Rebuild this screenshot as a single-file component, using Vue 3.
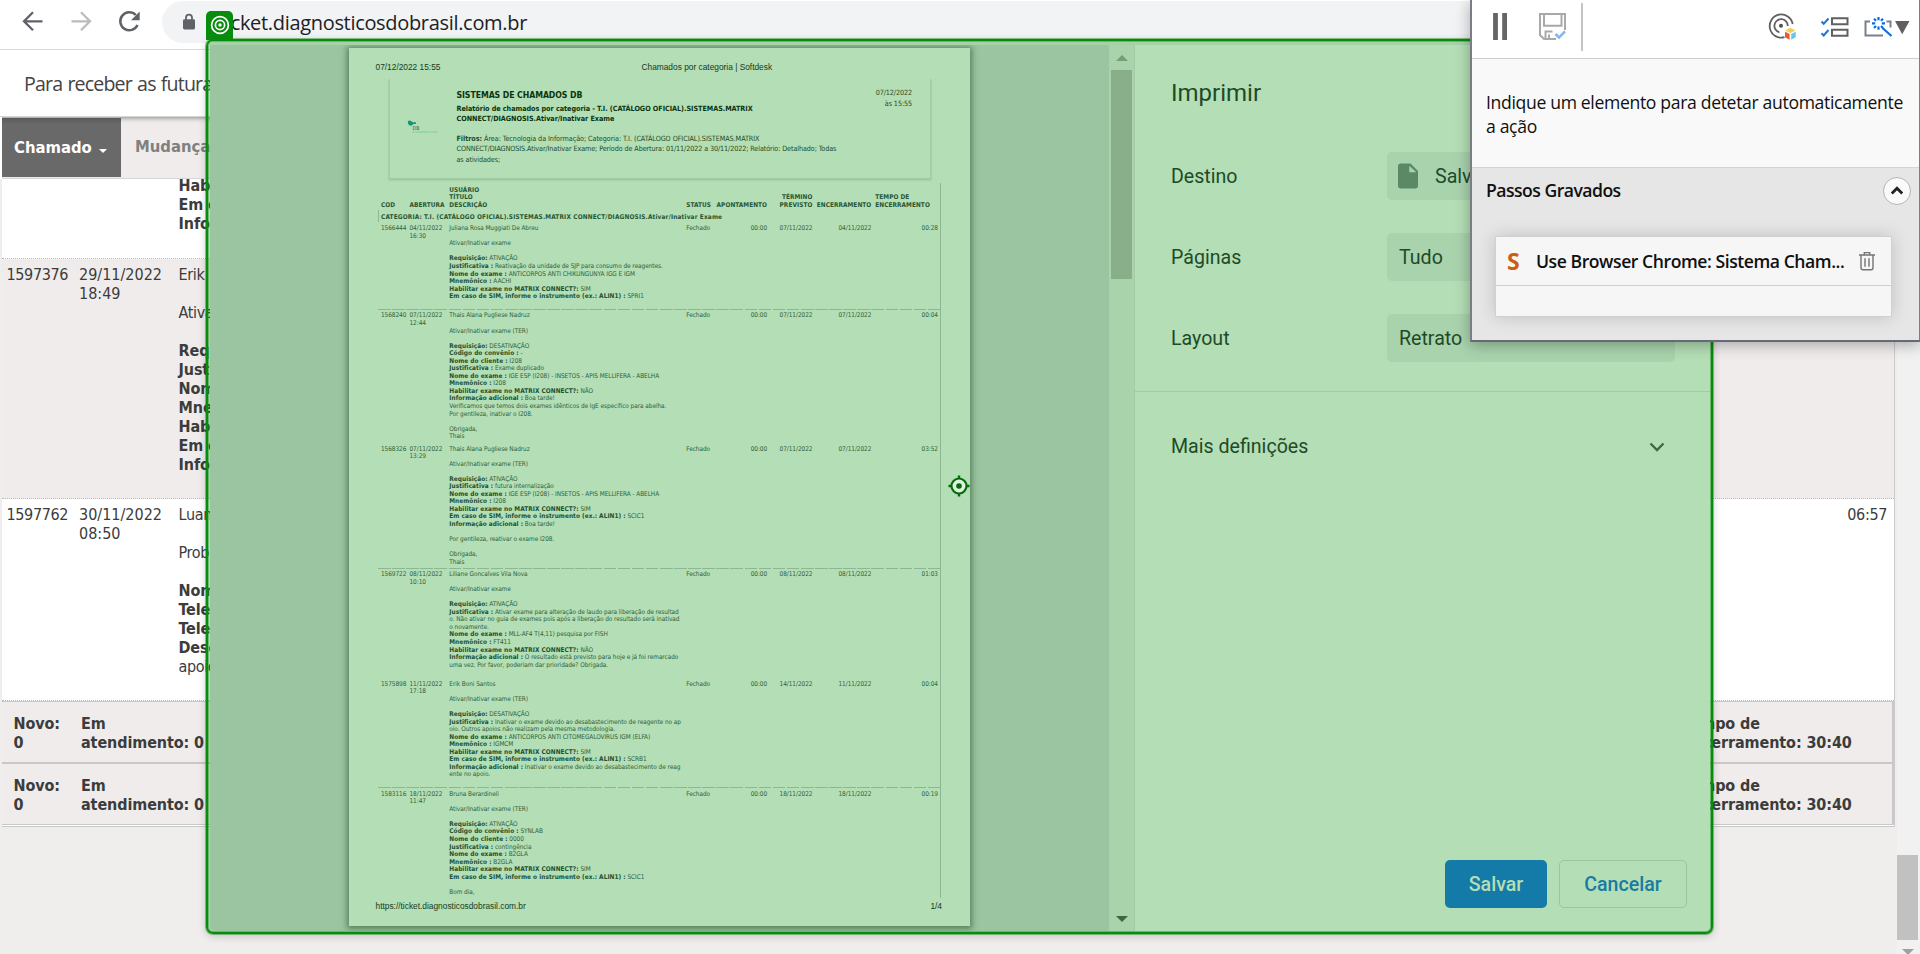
<script setup>
const tickets = [
  {
    id: '1566444', date: '04/11/2022', time: '16:30', user: 'Juliana Rosa Muggiati De Abreu', title: 'Ativar/Inativar exame',
    due: '07/11/2022', closed: '04/11/2022', spent: '00:28', gap: true, rule: false,
    lines: [
      ['Requisição:', 'ATIVAÇÃO'],
      ['Justificativa :', 'Reativação da unidade de SJP para consumo de reagentes.'],
      ['Nome do exame :', 'ANTICORPOS ANTI CHIKUNGUNYA IGG E IGM'],
      ['Mnemônico :', 'AACHI'],
      ['Habilitar exame no MATRIX CONNECT?:', 'SIM'],
      ['Em caso de SIM, informe o instrumento (ex.: ALIN1) :', 'SPRI1'],
    ],
  },
  {
    id: '1568240', date: '07/11/2022', time: '12:44', user: 'Thais Alana Pugliese Nadruz', title: 'Ativar/Inativar exame (TER)',
    due: '07/11/2022', closed: '07/11/2022', spent: '00:04', gap: false, rule: true,
    lines: [
      ['Requisição:', 'DESATIVAÇÃO'],
      ['Código do convênio :', '-'],
      ['Nome do cliente :', 'I208'],
      ['Justificativa :', 'Exame duplicado'],
      ['Nome do exame :', 'IGE ESP (I208) - INSETOS - APIS MELLIFERA - ABELHA'],
      ['Mnemônico :', 'I208'],
      ['Habilitar exame no MATRIX CONNECT?:', 'NÃO'],
      ['Informação adicional :', 'Boa tarde!'],
      ['', 'Verificamos que temos dois exames idênticos de IgE específico para abelha.'],
      ['', 'Por gentileza, inativar o I208.'],
      ['', ''],
      ['', 'Obrigada,'],
      ['', 'Thais'],
    ],
  },
  {
    id: '1568326', date: '07/11/2022', time: '13:29', user: 'Thais Alana Pugliese Nadruz', title: 'Ativar/Inativar exame (TER)',
    due: '07/11/2022', closed: '07/11/2022', spent: '03:52', gap: false, rule: false,
    lines: [
      ['Requisição:', 'ATIVAÇÃO'],
      ['Justificativa :', 'futura internalização'],
      ['Nome do exame :', 'IGE ESP (I208) - INSETOS - APIS MELLIFERA - ABELHA'],
      ['Mnemônico :', 'I208'],
      ['Habilitar exame no MATRIX CONNECT?:', 'SIM'],
      ['Em caso de SIM, informe o instrumento (ex.: ALIN1) :', 'SCIC1'],
      ['Informação adicional :', 'Boa tarde!'],
      ['', ''],
      ['', 'Por gentileza, reativar o exame I208.'],
      ['', ''],
      ['', 'Obrigada,'],
      ['', 'Thais'],
    ],
  },
  {
    id: '1569722', date: '08/11/2022', time: '10:10', user: 'Liliane Goncalves Vila Nova', title: 'Ativar/Inativar exame',
    due: '08/11/2022', closed: '08/11/2022', spent: '01:03', gap: true, rule: true,
    lines: [
      ['Requisição:', 'ATIVAÇÃO'],
      ['Justificativa :', 'Ativar exame para alteração de laudo para liberação de resultad'],
      ['', 'o. Não ativar no guia de exames pois após a liberação do resultado será inativad'],
      ['', 'o novamente.'],
      ['Nome do exame :', 'MLL-AF4 T(4,11) pesquisa por FISH'],
      ['Mnemônico :', 'FT411'],
      ['Habilitar exame no MATRIX CONNECT?:', 'NÃO'],
      ['Informação adicional :', 'O resultado está previsto para hoje e já foi remarcado'],
      ['', 'uma vez. Por favor, poderiam dar prioridade? Obrigada.'],
    ],
  },
  {
    id: '1575898', date: '11/11/2022', time: '17:18', user: 'Erik Boni Santos', title: 'Ativar/Inativar exame (TER)',
    due: '14/11/2022', closed: '11/11/2022', spent: '00:04', gap: true, rule: false,
    lines: [
      ['Requisição:', 'DESATIVAÇÃO'],
      ['Justificativa :', 'Inativar o exame devido ao desabastecimento de reagente no ap'],
      ['', 'oio. Outros apoios não realizam pela mesma metodologia.'],
      ['Nome do exame :', 'ANTICORPOS ANTI CITOMEGALOVIRUS IGM (ELFA)'],
      ['Mnemônico :', 'IGMCM'],
      ['Habilitar exame no MATRIX CONNECT?:', 'SIM'],
      ['Em caso de SIM, informe o instrumento (ex.: ALIN1) :', 'SCRB1'],
      ['Informação adicional :', 'Inativar o exame devido ao desabastecimento de reag'],
      ['', 'ente no apoio.'],
    ],
  },
  {
    id: '1583116', date: '18/11/2022', time: '11:47', user: 'Bruna Berardineli', title: 'Ativar/Inativar exame (TER)',
    due: '18/11/2022', closed: '18/11/2022', spent: '00:19', gap: false, rule: true,
    lines: [
      ['Requisição:', 'ATIVAÇÃO'],
      ['Código do convênio :', 'SYNLAB'],
      ['Nome do cliente :', '0000'],
      ['Justificativa :', 'contingência'],
      ['Nome do exame :', 'B2GLA'],
      ['Mnemônico :', 'B2GLA'],
      ['Habilitar exame no MATRIX CONNECT?:', 'SIM'],
      ['Em caso de SIM, informe o instrumento (ex.: ALIN1) :', 'SCIC1'],
      ['', ''],
      ['', 'Bom dia,'],
    ],
  },
]
</script>

<template>
  <div class="screen">
    <header class="chrome">
      <svg class="nav-icons" width="162" height="49" viewBox="0 0 162 49" fill="none" stroke-width="2.3">
        <path d="M42.5 21.3H24.5M33 12.3L24 21.3L33 30.3" stroke="#5f6368" />
        <path d="M71.5 21.3H89.5M81 12.3L90 21.3L81 30.3" stroke="#babcbe" />
        <path d="M137.5 25A9 9 0 1 1 135.8 15" stroke="#5f6368" stroke-width="2.5" />
        <path d="M139.7 11.5V20.2H131Z" fill="#5f6368" />
      </svg>
      <div class="omnibox">
        <svg class="lock" width="14" height="18" viewBox="0 0 14 18">
          <rect x="1" y="6.2" width="12" height="10.3" rx="1.4" fill="#5f6368" />
          <path d="M4 7V4.6A3 3 0 0 1 10 4.6V7" fill="none" stroke="#5f6368" stroke-width="1.8" />
        </svg>
        <span class="url">ticket.diagnosticosdobrasil.com.br</span>
      </div>
    </header>

    <div class="notice"><span>Para receber as futuras</span></div>

    <nav class="menu">
      <div class="tab active">Chamado<i class="caret"></i></div>
      <div class="tab">Mudança</div>
    </nav>

    <div class="body">
      <main class="content">
        <section class="list">
          <div class="row first">
            <p></p><p></p>
            <p><b>Habilitar<br>Em caso<br>Informa</b></p>
          </div>
          <div class="row shaded">
            <p>1597376</p>
            <p class="when">29/11/2022<br>18:49</p>
            <p>Erik<br><br>Ativar<br><br><b>Requis<br>Justific<br>Nome<br>Mnem<br>Habilit<br>Em caso<br>Informa</b></p>
          </div>
          <div class="row third">
            <p>1597762</p>
            <p class="when">30/11/2022<br>08:50</p>
            <p>Luana<br><br>Probl<br><br><b>Nome<br>Telef<br>Telef<br>Descr</b><br>apoio</p>
            <p class="elapsed">06:57</p>
          </div>
          <div v-for="n in 2" :key="n" class="total">
            <b>Novo:<br>0</b>
            <b>Em<br>atendimento: 0</b>
            <b>Tempo de<br>Encerramento: 30:40</b>
          </div>
        </section>
      </main>
      <aside class="page-scroll">
        <div class="page-thumb"></div>
        <i class="page-arrow"></i>
      </aside>
    </div>

    <div class="highlight">
      <div class="dialog">
        <section class="preview">
          <article class="sheet">
            <div class="sheet-top">
              <span>07/12/2022 15:55</span>
              <span class="sheet-title">Chamados por categoria | Softdesk</span>
            </div>
            <div class="banner">
              <svg class="logo" width="34" height="16" viewBox="0 0 34 16">
                <path d="M1 1.2Q3 -.3 4.5 1.5L8 3.1L5.5 4.8Q4 6.5 2 5Q.4 3.4 1 1.2Z" fill="#15967a" />
                <circle cx="8" cy="3.1" r="0.9" fill="#15604d" />
                <text x="5.5" y="10" font-size="5.2" textLength="7" fill="#245c47">DB</text>
                <text x="5.5" y="13.3" font-size="2.6" textLength="25" fill="#4fb795">DIAGNÓSTICOS</text>
              </svg>
              <div class="banner-text">
                <h1>SISTEMAS DE CHAMADOS DB</h1>
                <h2>Relatório de chamados por categoria - T.I. (CATÁLOGO OFICIAL).SISTEMAS.MATRIX<br>CONNECT/DIAGNOSIS.Ativar/Inativar Exame</h2>
                <p><b>Filtros:</b> Área: Tecnologia da Informação; Categoria: T.I. (CATÁLOGO OFICIAL).SISTEMAS.MATRIX<br>CONNECT/DIAGNOSIS.Ativar/Inativar Exame; Período de Abertura: 01/11/2022 a 30/11/2022; Relatório: Detalhado; Todas<br>as atividades;</p>
              </div>
              <div class="stamp">07/12/2022<br>às 15:55</div>
            </div>
            <div class="report">
              <div class="cols head">
                <span>COD</span><span>ABERTURA</span><span>USUÁRIO<br>TÍTULO<br>DESCRIÇÃO</span><span>STATUS</span>
                <span class="r">APONTAMENTO</span><span class="r">TÉRMINO<br>PREVISTO</span><span class="r">ENCERRAMENTO</span><span class="tempo">TEMPO DE<br>ENCERRAMENTO</span>
              </div>
              <div class="category">CATEGORIA: T.I. (CATÁLOGO OFICIAL).SISTEMAS.MATRIX CONNECT/DIAGNOSIS.Ativar/Inativar Exame</div>
              <div v-for="t in tickets" :key="t.id" class="cols ticket" :class="{ gap: t.gap, rule: t.rule }">
                <span>{{ t.id }}</span>
                <span>{{ t.date }}<br>{{ t.time }}</span>
                <div class="desc">
                  <p>{{ t.user }}</p><p></p><p>{{ t.title }}</p><p></p>
                  <p v-for="(l, i) in t.lines" :key="i"><b v-if="l[0]">{{ l[0] }}</b>{{ l[0] ? ' ' : '' }}{{ l[1] }}</p>
                </div>
                <span>Fechado</span>
                <span class="r">00:00</span><span class="r">{{ t.due }}</span><span class="r">{{ t.closed }}</span><span class="r">{{ t.spent }}</span>
              </div>
            </div>
            <div class="sheet-foot"><span>https://ticket.diagnosticosdobrasil.com.br</span><span>1/4</span></div>
          </article>
          <div class="track">
            <i class="up"></i>
            <div class="thumb"></div>
            <i class="down"></i>
          </div>
        </section>

        <section class="settings">
          <h3>Imprimir</h3>
          <div class="field">
            <label>Destino</label>
            <div class="select">
              <svg class="file" width="20" height="26" viewBox="0 0 20 26">
                <path d="M3 .5H12.5L20 8V22.5Q20 25.5 17 25.5H3Q0 25.5 0 22.5V3.5Q0 .5 3 .5Z" fill="#5b8966" />
                <path d="M11.3 2.8V9.2H18.2Z" fill="#a9d3ad" />
              </svg>
              <span>Salvar</span>
            </div>
          </div>
          <div class="field"><label>Páginas</label><div class="select"><span>Tudo</span></div></div>
          <div class="field"><label>Layout</label><div class="select"><span>Retrato</span></div></div>
          <div class="more">
            <span>Mais definições</span>
            <svg width="16" height="10" viewBox="0 0 16 10"><path d="M1.5 1.5L8 8L14.5 1.5" fill="none" stroke="#3c6945" stroke-width="2.3" /></svg>
          </div>
          <div class="actions">
            <button class="save">Salvar</button>
            <button class="cancel">Cancelar</button>
          </div>
        </section>
      </div>
    </div>

    <div class="badge">
      <svg width="20" height="20" viewBox="0 0 20 20" fill="none" stroke="#fff" stroke-width="1.7">
        <circle cx="10" cy="10" r="8.4" /><circle cx="10" cy="10" r="4.6" /><circle cx="10" cy="10" r="1.7" fill="#fff" stroke="none" />
      </svg>
    </div>

    <svg class="crosshair" width="22" height="22" viewBox="0 0 22 22">
      <path d="M11 .5V21.5M.5 11H21.5" stroke="#056b09" stroke-width="2.4" />
      <circle cx="11" cy="11" r="7.5" fill="#def0df" stroke="#056b09" stroke-width="2.1" />
      <circle cx="11" cy="11" r="2.8" fill="#056b09" />
    </svg>

    <section class="recorder">
      <div class="toolbar">
        <svg width="446" height="58" viewBox="0 0 446 58" fill="none">
          <path d="M23.5 13V40M32.6 13V40" stroke="#656565" stroke-width="4.8" />
          <g stroke="#a9a9a9" stroke-width="2">
            <path d="M84 39H72L68 35V14H93V30M72 14V25.7H89.5V14" />
            <path d="M73.5 39V31.4H80.5M77 34.5V39" />
          </g>
          <path d="M83.5 34L87 37.5L93 31.3" stroke="#84b4f2" stroke-width="2.5" />
          <path d="M110 3V51" stroke="#c4c4c4" stroke-width="2" />
          <g stroke="#606060" stroke-width="1.8">
            <path d="M312.5 37.2A11.6 11.6 0 1 1 320.7 24" />
            <path d="M307.5 32.4A6.7 6.7 0 1 1 315.8 26" />
          </g>
          <circle cx="309" cy="25.7" r="2" fill="#505050" />
          <path d="M313.2 30.4L318.4 27.8L323.5 30.4L318.4 33Z" fill="#f3cf57" />
          <path d="M313 31.8L317.6 34V39.8L313 37.2Z" fill="#f0562b" />
          <path d="M323.7 31.8L319.2 34V39.8L323.7 37.2Z" fill="#63c6f2" />
          <path d="M349.5 21.5L351.7 23.8L356.5 18.5M349.5 33.2L351.7 35.5L356.5 30" stroke="#1976dc" stroke-width="2" />
          <path d="M360 18.2H375.5V24.2H360ZM360 29.7H375.5V35.7H360Z" stroke="#606060" stroke-width="2" />
          <path d="M398 21.5H393.5V35.5H411M414.5 21.5H418.5V27.5" stroke="#76828b" stroke-width="2" />
          <path d="M410.5 28L419.5 36" stroke="#0d6ce0" stroke-width="2.2" />
          <path d="M406.5 17V20.2M406.5 26.5V29.8M400 23.4H403.2M409.8 23.4H413M402 18.8L404 20.8M409 26L411 28M411 18.8L409 20.8M402 28L404 26" stroke="#0d6ce0" stroke-width="2.2" />
          <path d="M423 21H437.5L430.2 34.3Z" fill="#5f5f5f" />
        </svg>
      </div>
      <div class="hint">Indique um elemento para detetar automaticamente<br>a ação</div>
      <div class="steps">
        <div class="steps-head">
          <span>Passos Gravados</span>
          <div class="collapse">
            <svg width="14" height="9" viewBox="0 0 14 9"><path d="M1.8 7.5L7 2.3L12.2 7.5" fill="none" stroke="#222" stroke-width="2.8" /></svg>
          </div>
        </div>
        <div class="card">
          <div class="step">
            <b class="s-logo">S</b>
            <span>Use Browser Chrome: Sistema Cham...</span>
            <svg width="18" height="20" viewBox="0 0 18 20" fill="none" stroke="#747474" stroke-width="1.4">
              <path d="M1 4H17M6.3 4V1.6H11.7V4M3 4V16.7Q3 18.7 5 18.7H13Q15 18.7 15 16.7V4M7 7.2V15.7M11 7.2V15.7" />
            </svg>
          </div>
          <div class="empty"></div>
        </div>
      </div>
    </section>
  </div>
</template>

<style>
html, body { margin: 0; overflow: hidden; }
</style>

<style scoped>
* { box-sizing: border-box; }
p, h1, h2, h3 { margin: 0; }
.screen { position: relative; width: 1920px; height: 954px; overflow: hidden; background: #fff; display: flex; flex-direction: column; font-family: "DejaVu Sans Condensed", "DejaVu Sans", sans-serif; font-stretch: condensed; color: #3c3c3c; }

.chrome { height: 50px; flex: none; display: flex; border-bottom: 1px solid #dadada; }
.nav-icons { flex: none; }
.omnibox { flex: 1; margin-top: 1px; height: 42px; border-radius: 21px 0 0 21px; background: #f1f3f4; display: flex; align-items: center; padding-left: 20px; }
.lock { flex: none; margin-top: -1px; }
.url { width: 331px; display: flex; justify-content: flex-end; white-space: nowrap; font: 20px/43px "Open Sans", sans-serif; letter-spacing: -0.32px; color: #202124; }

.notice { height: 67px; flex: none; border-bottom: 1px solid #d6d6d6; padding-left: 24px; font: 19.6px/68px "Open Sans", sans-serif; letter-spacing: -0.85px; word-spacing: 1px; color: #444; }
.menu { height: 62px; flex: none; display: flex; margin-left: 2px; padding: 1px 0; background: #efeceb; border-bottom: 1px solid #d6d6d6; box-shadow: inset 0 5px 5px -4px #888; font-size: 16.5px; font-weight: bold; line-height: 58px; color: #808080; position: relative; z-index: 0; }
.tab { padding-left: 14px; }
.tab.active { width: 119px; padding-left: 12px; background: linear-gradient(#5a5a5a, #696969 6px); color: #fff; display: flex; align-items: center; }
.caret { margin: 7px 0 0 7px; border: 4px solid transparent; border-top-color: #fff; border-bottom: 0; }

.body { flex: 1; display: flex; min-height: 0; }
.content { flex: 1; background: #efeeec; padding-left: 2px; }
.list { width: 1893px; height: 648px; background: #fff; border-right: 1px solid #ccc; border-bottom: 1px solid #c8c8c8; font-size: 16px; line-height: 19px; letter-spacing: -0.35px; }
.list b { letter-spacing: -0.1px; }
.row { display: grid; grid-template-columns: 72.5px 99.5px 1fr 60px; padding-left: 4.5px; border-bottom: 1px dotted #bbb; }
.when { letter-spacing: 0; }
.first { height: 80px; align-items: start; }
.first p { margin-top: -3px; }
.shaded { height: 240px; background: #efeceb; padding-top: 6px; }
.third { height: 202px; padding-top: 6px; }
.elapsed { text-align: right; padding-right: 7px; }
.total { height: 62px; border: 1px solid #c8c8c8; border-width: 1px 2px 1px 0; background: #efeceb; display: grid; grid-template-columns: 67.5px 1fr 209px; padding: 12px 0 0 11.5px; }

.page-scroll { width: 23px; background: #f1f1f1; padding: 676px 2px 0 0; }
.page-thumb { height: 85px; background: #c1c1c1; }
.page-arrow { display: block; margin: 9px 0 0 5px; width: 0; border: 6px solid transparent; border-top-color: #a0a0a0; border-bottom: 0; }

.highlight { position: absolute; left: 206px; top: 39px; width: 1507px; height: 895px; border: 2px solid #078c0d; border-radius: 7px; background: rgba(5, 145, 8, 0.3); box-shadow: 0 0 0 1px rgba(7, 140, 13, 0.45), 0 2px 8px rgba(0, 0, 0, 0.2), inset 0 0 0 1px rgba(7, 140, 13, 0.4); padding: 1px 1px 1px 2px; overflow: hidden; }
.dialog { height: 100%; border-top: 3px solid #a8d1aa; display: flex; background: #b4deb5; border-radius: 0 0 5px 5px; overflow: hidden; }
.preview { width: 925px; flex: none; display: flex; background: #9bc4a0; overflow: hidden; }
.sheet { width: 621px; flex: none; height: 878px; margin: 3px 0 0 139px; background: #b4deb5; box-shadow: 0 1px 6px 2px rgba(40, 85, 50, 0.6); font-size: 6.44px; line-height: 7.56px; color: #2f623b; }
.sheet-top { display: flex; padding: 13.4px 0 0 26.5px; font: 8.35px/12px "Liberation Sans", sans-serif; color: #163b1c; height: 31px; }
.sheet-title { margin-left: 201px; }
.banner { margin-left: 39.5px; width: 542px; height: 99.5px; display: flex; border: 1px solid #a1cba3; border-top: 0; box-shadow: 0 1px 2px rgba(50, 100, 55, 0.25); clip-path: inset(0 -4px -4px -4px); }
.logo { margin: 41px 0 0 17.5px; flex: none; }
.banner-text { width: 402px; flex: none; margin-left: 15.5px; padding-top: 10.2px; white-space: nowrap; color: #0b3510; }
.banner-text h1 { font-size: 8.7px; line-height: 12px; letter-spacing: -0.08px; }
.banner-text h2 { font-size: 7.2px; line-height: 10px; margin-top: 2.6px; letter-spacing: -0.04px; }
.banner-text p { font-size: 7.2px; line-height: 10.5px; margin-top: 9.8px; letter-spacing: -0.1px; color: #1d4c27; }
.banner-text p:first-line { letter-spacing: -0.06px; }
.stamp { flex: 1; padding: 8px 17.5px 0 0; text-align: right; font-size: 7.2px; line-height: 11px; letter-spacing: -0.1px; color: #1d4c27; }
.report { margin: 4.5px 29px 0 29px; width: 563px; height: 715px; border-right: 1px solid #8db693; overflow: hidden; }
.cols { display: grid; grid-template-columns: 28.5px 39.8px 237px 29.5px 51.3px 45.3px 58.9px 66.7px; padding-left: 3px; white-space: nowrap; }
.r { text-align: right; }
.head { height: 27px; align-items: end; font-weight: bold; color: #285633; padding-bottom: 0.5px; letter-spacing: 0.06px; }
.tempo { padding-left: 4px; }
.category { height: 12px; border-left: 1px solid #8db693; padding-left: 2px; line-height: 14.4px; font-weight: bold; letter-spacing: 0.16px; color: #285633; white-space: nowrap; }
.ticket { padding-top: 3.3px; padding-bottom: 1.5px; letter-spacing: -0.06px; }
.ticket.gap { padding-bottom: 8.4px; }
.ticket.rule { background: repeating-linear-gradient(90deg, #8db693 0 12.6px, transparent 12.6px 14.1px) 0 0 / 100% 1px no-repeat; }
.desc p { height: 7.56px; }
.desc b { color: #225030; letter-spacing: 0.05px; }
.sheet-foot { display: flex; justify-content: space-between; padding: 2px 28px 0 26.5px; font: 8.35px/12px "Liberation Sans", sans-serif; color: #163b1c; }
.track { margin-left: 139px; width: 26px; flex: none; background: #a9d3ab; display: flex; flex-direction: column; align-items: center; padding: 10px 2px 9px 2px; border-right: 1px solid #a3cba5; }
.up { border: 6px solid transparent; border-top: 0; border-bottom-color: #759e77; }
.thumb { width: 21px; height: 209px; margin-top: 9px; background: #88af89; }
.down { margin-top: auto; border: 6px solid transparent; border-bottom: 0; border-top-color: #3c6743; }

.settings { flex: 1; display: flex; flex-direction: column; font: 19.6px/50px Roboto, sans-serif; color: #1d4b28; }
.settings h3 { font: 24px/48px Roboto, sans-serif; padding: 24px 0 0 36px; height: 107px; }
.field { display: flex; height: 48px; margin-bottom: 33px; padding-left: 36px; }
.field label { width: 216px; }
.select { width: 288px; background: #a9d3ad; border-radius: 5px; padding-left: 12px; display: flex; align-items: center; }
.select span { padding-top: 2px; }
.file { margin: 0 17px 0 -1px; }
.more { margin-top: -4px; border-top: 1px solid #a2cba5; padding: 30px 45px 0 36px; display: flex; justify-content: space-between; align-items: center; }
.actions { margin: auto 23px 23px 0; display: flex; justify-content: flex-end; gap: 12px; }
button { height: 48px; padding: 0; border-radius: 5px; font: 500 19.6px Roboto, sans-serif; }
.save { width: 102px; border: 0; background: #147aa7; color: #b4deb5; }
.cancel { width: 128px; border: 1px solid #9bc4a0; background: transparent; color: #187ba3; }

.badge { position: absolute; left: 206px; top: 11px; width: 27px; height: 29px; border-radius: 5px 5px 0 0; background: #078c0d; display: flex; justify-content: center; padding-top: 4px; }
.crosshair { position: absolute; left: 948px; top: 475px; }

.recorder { position: absolute; left: 1470px; top: 0; width: 450px; height: 342px; border: 1px solid #7a7d86; border-left-width: 2px; border-top: 0; border-bottom: 2px solid #646a76; background: #e6e6e6; box-shadow: 0 3px 14px rgba(0, 0, 0, 0.3); font: 17.6px/24px "Open Sans", sans-serif; color: #101010; display: flex; flex-direction: column; }
.toolbar { height: 59px; background: #fff; border-bottom: 1px solid #cfcfcf; }
.hint { height: 109px; background: #f9f9f9; border-bottom: 1px solid #d4d4d4; padding: 31px 0 0 14px; letter-spacing: -0.34px; white-space: nowrap; }
.steps { flex: 1; padding: 8px 8px 0 14px; }
.steps-head { display: flex; justify-content: space-between; align-items: center; font-weight: 600; letter-spacing: -0.52px; height: 29px; }
.steps-head span { padding-bottom: 2px; }
.collapse { width: 28px; height: 28px; border: 1px solid #b5b5b5; border-radius: 50%; background: #fafafa; display: flex; align-items: center; justify-content: center; }
.card { margin: 31px 19px 0 9px; height: 81px; border: 1px solid #d0d0d0; background: #f6f6f6; box-shadow: 0 0 16px rgba(0, 0, 0, 0.17); }
.step { height: 49px; display: flex; align-items: center; border-bottom: 1px solid #cfcfcf; font-weight: 600; letter-spacing: -0.45px; white-space: nowrap; }
.s-logo { width: 29px; margin-left: 11px; font: bold 23px/24px "Open Sans", sans-serif; color: #cc5f10; }
.step span { width: 322px; }
</style>
